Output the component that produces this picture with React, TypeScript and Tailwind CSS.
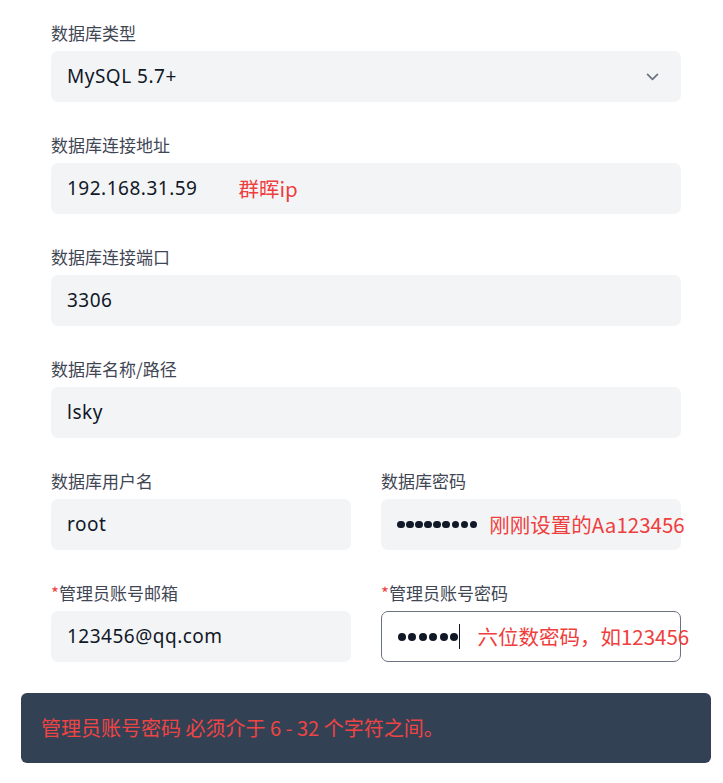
import React from "react";

const font = { fontFamily: '"Noto Sans", "Noto Sans CJK SC", sans-serif' };
const cjk = { fontFamily: '"Noto Sans CJK SC", "Noto Sans", sans-serif' };

function Label({ text, required }: { text: string; required?: boolean }) {
  return (
    <div className="h-[24px] flex items-center text-[17px] text-[#3f4654] mb-[6px]" style={cjk}>
      {required && <span className="text-[#ef4444]">*</span>}
      {text}
    </div>
  );
}

function Box({ children, focused }: { children: React.ReactNode; focused?: boolean }) {
  return (
    <div
      className={
        "h-[51px] rounded-[7px] flex items-center pl-[16px] pr-[18px] text-[19px] tracking-[0.5px] text-[#111827] " +
        (focused ? "bg-white border border-[#6b7280]" : "bg-[#f3f4f6]")
      }
      style={font}
    >
      {children}
    </div>
  );
}

const Red = ({ children, className }: { children: React.ReactNode; className?: string }) => (
  <span className={"text-[#ef3e3e] text-[20.5px] tracking-normal whitespace-nowrap " + (className || "")} style={cjk}>
    {children}
  </span>
);

const Dots = ({ n, size, gap }: { n: number; size: number; gap: number }) => (
  <span className="flex items-center shrink-0" style={{ gap }}>
    {Array.from({ length: n }).map((_, i) => (
      <span key={i} className="rounded-full bg-[#111827] shrink-0" style={{ width: size, height: size }} />
    ))}
  </span>
);

export default function App() {
  return (
    <div className="w-[723px] h-[783px] bg-white overflow-hidden relative">
      <div className="pl-[51px] pr-[42px] pt-[21px] flex flex-col gap-[31px]">
        <div>
          <Label text="数据库类型" />
          <Box>
            <span className="flex-1">MySQL 5.7+</span>
            <svg width="17" height="17" viewBox="0 0 24 24" fill="none" stroke="#6b7280" strokeWidth="2.4" strokeLinecap="round" strokeLinejoin="round" className="mr-[2px]">
              <path d="M5 9l7 7 7-7" />
            </svg>
          </Box>
        </div>
        <div>
          <Label text="数据库连接地址" />
          <Box>
            <span>192.168.31.59</span>
            <Red className="ml-[41px]">群晖ip</Red>
          </Box>
        </div>
        <div>
          <Label text="数据库连接端口" />
          <Box>3306</Box>
        </div>
        <div>
          <Label text="数据库名称/路径" />
          <Box>lsky</Box>
        </div>
        <div className="grid grid-cols-2 gap-[30px]">
          <div>
            <Label text="数据库用户名" />
            <Box>root</Box>
          </div>
          <div>
            <Label text="数据库密码" />
            <Box>
              <Dots n={9} size={7.6} gap={1.5} />
              <Red className="ml-[12px]">刚刚设置的Aa123456</Red>
            </Box>
          </div>
        </div>
        <div className="grid grid-cols-2 gap-[30px]">
          <div>
            <Label text="管理员账号邮箱" required />
            <Box>123456@qq.com</Box>
          </div>
          <div>
            <Label text="管理员账号密码" required />
            <Box focused>
              <Dots n={6} size={8} gap={2.4} />
              <span className="w-[1.5px] h-[25px] bg-[#111827] ml-[1px] shrink-0" />
              <Red className="ml-[17px]">六位数密码，如123456</Red>
            </Box>
          </div>
        </div>
      </div>
      <div className="absolute left-[21px] top-[693px] w-[690px] h-[70px] rounded-[6px] bg-[#334155] flex items-center pl-[20px]">
        <span className="text-[#ef4444] text-[20px]" style={cjk}>
          管理员账号密码 必须介于 6 - 32 个字符之间。
        </span>
      </div>
    </div>
  );
}
